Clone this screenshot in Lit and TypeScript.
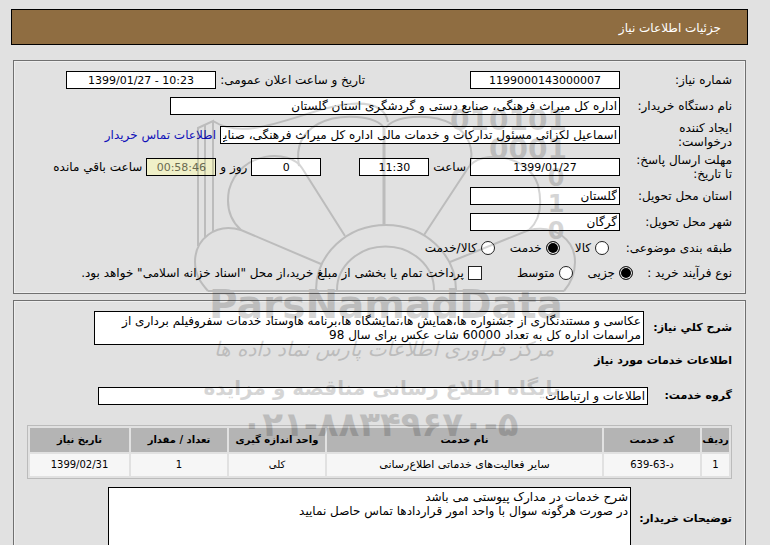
import { LitElement, html, css } from "lit";
import { customElement } from "lit/decorators.js";

@customElement("need-watermark")
class NeedWatermark extends LitElement {
  static styles = css`
    :host { display: block; }
    svg { display: block; opacity: 0.16; direction: ltr; }
    .line { fill: none; stroke: #000; stroke-width: 2; }
    .thick { stroke-width: 3; }
    text { font-family: "DejaVu Sans", sans-serif; fill: #000; text-anchor: middle; }
    .bits { font-size: 28px; font-weight: bold; text-anchor: end; }
    .bit { font-size: 24px; font-weight: bold; }
    .brand { font-size: 39px; font-weight: bold; }
    .script { font-size: 20px; font-style: italic; }
    .site { font-size: 20px; font-weight: bold; }
    .phone { font-size: 34px; font-weight: bold; }
  `;
  render() {
    return html`<svg width="770" height="545" viewBox="0 0 770 545" aria-hidden="true">
      <g class="line">
        <path d="M198 246V128L213 121V232M205 125V237M213 121C250 145 310 106 350 104Q384 101 388 122" />
        <path class="thick" d="M384 225V128" />
        <path d="M384 128C378 116 340 112 318 124C300 134 296 150 299 166" />
        <path d="M345 236L302 168C290 149 240 150 229 190C226 206 230 220 241 230" />
        <path d="M321 264L241 230C215 222 195 240 195 262C195 276 202 284 208 291" />
        <path d="M386 128C392 116 430 112 452 124C470 134 474 150 470 166" />
        <path d="M424 235L468 168C480 149 528 154 538 185C543 206 540 220 529 230" />
        <path d="M450 262L529 230C555 224 575 240 575 262C575 276 570 284 564 291" />
        <path d="M316 290A70 65 0 0 1 456 290M337 290A48 43 0 0 1 434 290M208 291H564" />
      </g>
      <text class="bits" x="567" y="130">010101</text>
      <text class="bits" x="567" y="159">0001</text>
      <text class="bit" x="556" y="186">0</text>
      <text class="bit" x="556" y="212">1</text>
      <text class="bit" x="556" y="239">0</text>
      <text class="brand" x="386" y="318">ParsNamadData</text>
      <text class="script" x="384" y="356" direction="rtl">مرکز فرآوری اطلاعات پارس نماد داده ها</text>
      <text class="site" x="382" y="395" direction="rtl">پایگاه اطلاع رسانی مناقصه و مزایده</text>
      <text class="phone" x="380" y="436">۰۲۱-۸۸۳۴۹۶۷۰-۵</text>
    </svg>`;
  }
}

@customElement("app-root")
class AppRoot extends LitElement {
  static styles = css`
    * { box-sizing: border-box; }
    :host {
      display: block; position: relative; direction: rtl; overflow: hidden;
      padding: 9px 22px 0 11px; min-height: 100vh; background: #e1e1e1; color: #000;
      font: 12px/14px "DejaVu Sans", sans-serif;
    }
    header {
      display: flex; align-items: center; height: 36px; padding: 2px 26px 0;
      border: 1px solid #000; background: #8f6d41; color: #fff;
    }
    h1, h2 { margin: 0; line-height: 14px; }
    h1 { font-size: 12px; font-weight: normal; }
    h2 { font-size: 11px; font-weight: bold; }
    .panel {
      margin: 15px 2px 0; padding: 6px 13px 8px; border: 1px solid #707070;
      box-shadow: inset 0 0 0 1px #eee;
    }
    .panel + .panel { margin-top: 6px; padding: 10px 13px 12px; }
    .row { display: flex; align-items: center; gap: 4px; height: 26px; white-space: nowrap; }
    .tall { height: 32px; }
    .name { width: 108px; flex: none; white-space: normal; }
    .name.narrow { width: 145px; white-space: nowrap; }
    input, textarea { font: inherit; color: inherit; border: 1px solid #000; border-radius: 0; background: #fff; margin: 0; }
    .box { height: 18px; padding: 0 2px; min-width: 0; }
    .mid { width: 150px; text-align: center; font-size: 11px; }
    .text { width: 150px; }
    .small { width: 70px; text-align: center; font-size: 11px; }
    .wide { width: 450px; }
    .wide2 { width: 400px; }
    .full { flex: 0 1 550px; }
    .gap { margin-inline-start: 101px; }
    .days { margin-inline-start: 34px; }
    .left { background: #f0f0c8; color: #6b6b50; }
    a { color: #1010b8; text-decoration: none; }
    .pick { display: flex; align-items: center; gap: 4px; }
    .pick input { appearance: none; flex: none; width: 14px; height: 14px; border: 1px solid #222; }
    .pick input[type="radio"] { border-radius: 50%; }
    .pick input[type="radio"]:checked { background: #000; box-shadow: inset 0 0 0 1px #fff; }
    .kinds { gap: 15px; }
    .kinds .name { width: 108px; white-space: nowrap; }
    .flow { height: 24px; }
    .flow .name { width: 84px; }
    .flow .push { margin-inline-start: 20px; }
    textarea { display: block; resize: none; overflow: hidden; padding: 2px; }
    .about { height: 34px; flex: 0 1 550px; }
    .notes { height: 64px; flex: 0 1 523px; }
    .item { display: flex; align-items: center; justify-content: flex-start; white-space: nowrap; }
    .item label { font-size: 11px; font-weight: bold; flex: none; }
    .item .l1 { width: 88px; }
    .item .l2 { width: 84px; }
    .item .l3 { width: 101px; }
    .head { margin: 9px 0 19px; }
    table {
      width: 100%; margin: 20px 0 8px; table-layout: fixed; border: 1px solid #bbb;
      border-collapse: separate; border-spacing: 2px; text-align: center; font-size: 10px;
    }
    th { height: 24px; padding: 0; background: #b4b4b4; }
    td { height: 22px; padding: 0; background: #f6f6f6; }
    .service { font-size: 11px; }
    .c1 { width: 27px; }
    .c2, .c4, .c5 { width: 96px; }
    .c6 { width: 99px; }
    need-watermark { position: absolute; top: 0; left: calc(50% - 385px); pointer-events: none; }
  `;

  render() {
    return html`
      <header><h1>جزئیات اطلاعات نیاز</h1></header>
      <section class="panel">
        <div class="row">
          <label class="name" for="no">شماره نیاز:</label>
          <input class="box mid" id="no" value="1199000143000007" />
          <label class="name narrow gap" for="pub">تاریخ و ساعت اعلان عمومی:</label>
          <input class="box mid" id="pub" dir="ltr" value="1399/01/27 - 10:23" />
        </div>
        <div class="row">
          <label class="name" for="org">نام دستگاه خریدار:</label>
          <input class="box wide" id="org" value="اداره کل میراث فرهنگی، صنایع دستی و گردشگری استان گلستان" />
        </div>
        <div class="row tall">
          <label class="name" for="by">ایجاد کننده<br />درخواست:</label>
          <input class="box wide2" id="by" value="اسماعیل لکزائی مسئول تدارکات و خدمات مالی اداره کل میراث فرهنگی، صنایع دستی و گردشگری" />
          <a href="#contact">اطلاعات تماس خریدار</a>
        </div>
        <div class="row tall">
          <label class="name" for="due">مهلت ارسال پاسخ:<br />تا تاریخ:</label>
          <input class="box mid" id="due" dir="ltr" value="1399/01/27" />
          <label for="hour">ساعت</label>
          <input class="box small" id="hour" value="11:30" />
          <input class="box small days" id="days" value="0" />
          <label for="days">روز و</label>
          <input class="box small left" id="rest" value="00:58:46" />
          <label for="rest">ساعت باقي مانده</label>
        </div>
        <div class="row">
          <label class="name" for="prov">استان محل تحویل:</label>
          <input class="box text" id="prov" value="گلستان" />
        </div>
        <div class="row">
          <label class="name" for="city">شهر محل تحویل:</label>
          <input class="box text" id="city" value="گرگان" />
        </div>
        <div class="row kinds">
          <span class="name">طبقه بندی موضوعی:</span>
          <label class="pick"><input type="radio" name="kind" />کالا</label>
          <label class="pick"><input type="radio" name="kind" checked />خدمت</label>
          <label class="pick"><input type="radio" name="kind" />کالا/خدمت</label>
        </div>
        <div class="row kinds flow">
          <span class="name">نوع فرآیند خرید :</span>
          <label class="pick"><input type="radio" name="flow" checked />جزیی</label>
          <label class="pick"><input type="radio" name="flow" />متوسط</label>
          <label class="pick push"><input type="checkbox" />پرداخت تمام یا بخشی از مبلغ خرید،از محل "اسناد خزانه اسلامی" خواهد بود.</label>
        </div>
      </section>
      <section class="panel">
        <div class="item">
          <label class="l1" for="about">شرح کلي نیاز:</label>
          <textarea class="about" id="about" .value=${"عکاسی و مستندنگاری از جشنواره ها،همایش ها،نمایشگاه ها،برنامه هاوستاد خدمات سفروفیلم برداری از\nمراسمات اداره کل به تعداد 60000 شات عکس برای سال 98"}></textarea>
        </div>
        <h2 class="head">اطلاعات خدمات مورد نیاز</h2>
        <div class="item">
          <label class="l2" for="group">گروه خدمت:</label>
          <input class="box full" id="group" value="اطلاعات و ارتباطات" />
        </div>
        <table>
          <thead>
            <tr>
              <th class="c1">ردیف</th><th class="c2">کد خدمت</th><th>نام خدمت</th>
              <th class="c4">واحد اندازه گیری</th><th class="c5">تعداد / مقدار</th><th class="c6">تاریخ نیاز</th>
            </tr>
          </thead>
          <tbody>
            <tr>
              <td>1</td><td>د-63-639</td><td class="service">سایر فعالیت‌های خدماتی اطلاع‌رسانی</td>
              <td>کلی</td><td>1</td><td>1399/02/31</td>
            </tr>
          </tbody>
        </table>
        <div class="item">
          <label class="l3" for="notes">توضیحات خریدار:</label>
          <textarea class="notes" id="notes" .value=${"شرح خدمات در مدارک پیوستی می باشد\nدر صورت هرگونه سوال با واحد امور قراردادها تماس حاصل نمایید"}></textarea>
        </div>
      </section>
      <need-watermark></need-watermark>
    `;
  }
}
